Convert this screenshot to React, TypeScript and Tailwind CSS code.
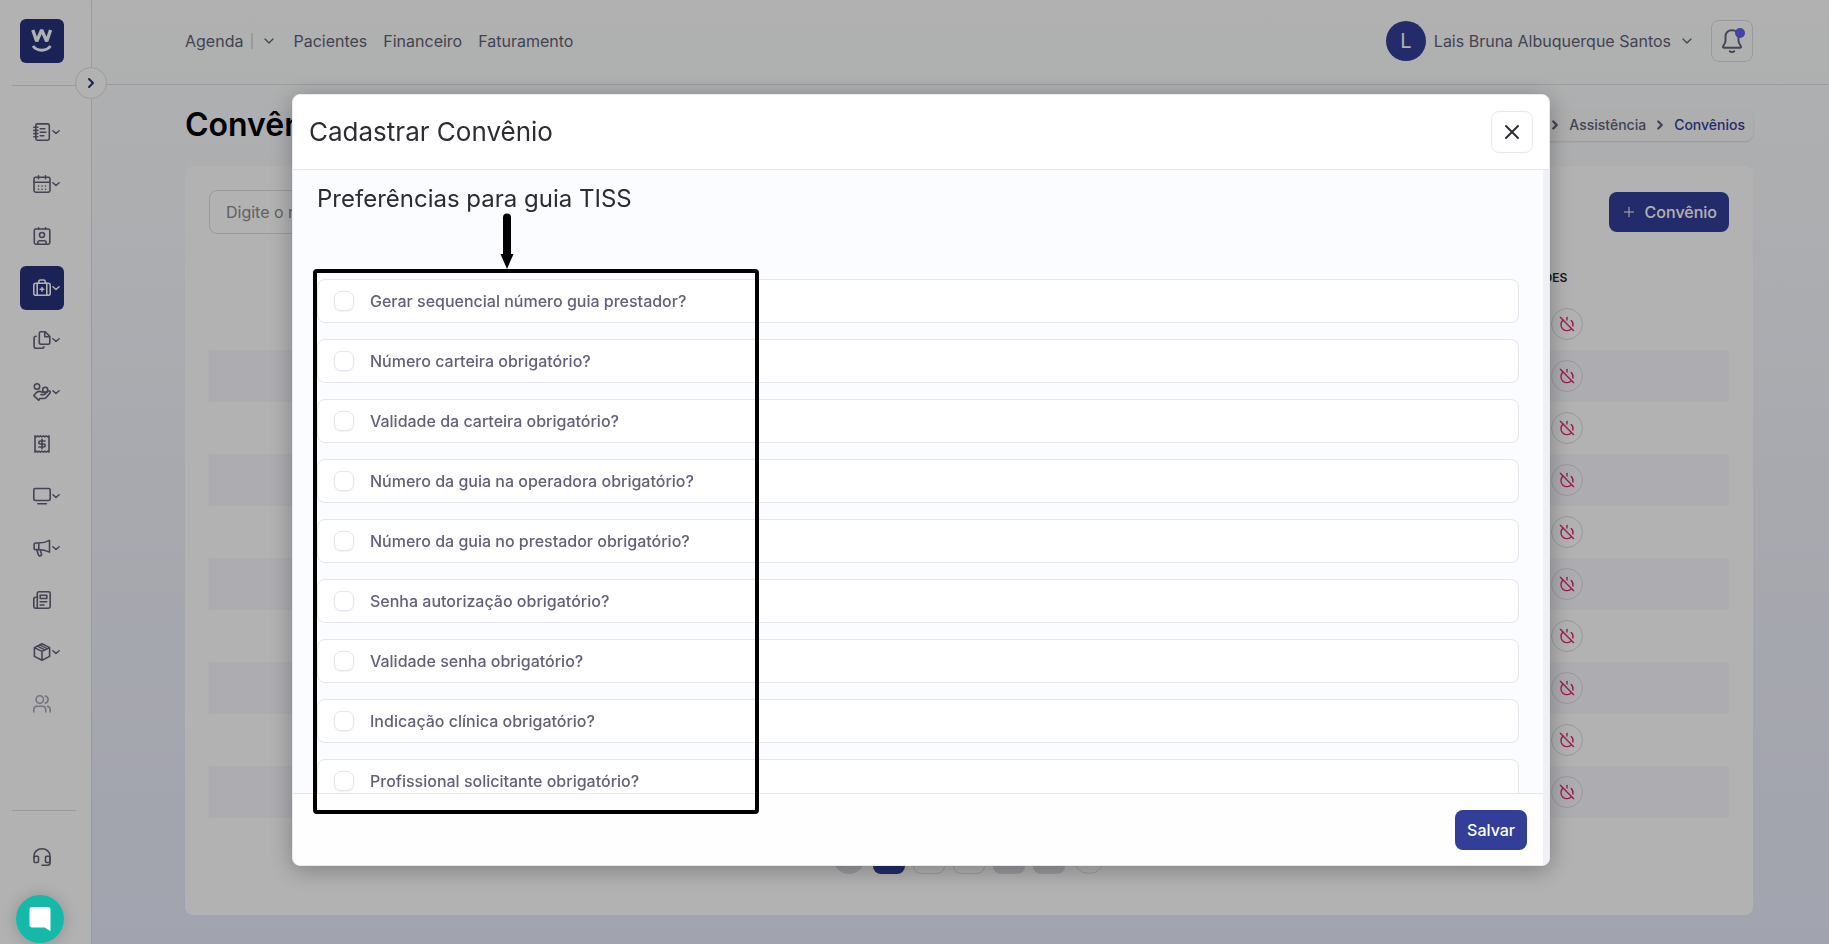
import type { ReactNode } from 'react';
import { ChevronDown, ChevronRight, Plus, PowerOff, X } from 'lucide-react';

const options = [
  'Gerar sequencial número guia prestador?',
  'Número carteira obrigatório?',
  'Validade da carteira obrigatório?',
  'Número da guia na operadora obrigatório?',
  'Número da guia no prestador obrigatório?',
  'Senha autorização obrigatório?',
  'Validade senha obrigatório?',
  'Indicação clínica obrigatório?',
  'Profissional solicitante obrigatório?',
];

const rows = Array.from({ length: 10 }, (_, i) => i + 1);

function Icon({ children, size = 18 }: { children: ReactNode; size?: number }) {
  return (
    <svg
      width={size}
      height={size}
      viewBox="0 0 18 18"
      fill="none"
      stroke="currentColor"
      strokeWidth="1.6"
      strokeLinecap="round"
      strokeLinejoin="round"
      aria-hidden="true"
    >
      {children}
    </svg>
  );
}

const menu = [
  {
    label: 'Cadastros',
    arrow: true,
    icon: (
      <Icon>
        <rect x="2.8" y="0.9" width="13.5" height="16.3" rx="1.6" />
        <path d="M0.8 4.2h4M0.8 7.4h4M0.8 10.6h4M0.8 13.8h4M7.2 5.7h4.6M7.2 9.2h5.6M7.2 12.7h3.6" />
      </Icon>
    ),
  },
  {
    label: 'Agenda',
    arrow: true,
    icon: (
      <Icon>
        <rect x="1" y="2.3" width="16" height="14.9" rx="1.6" />
        <path d="M1 7.3h16M5.5 0.8v3M12.5 0.8v3" />
        <path d="M5.5 11h.1M9 11h.1M12.5 11h.1M5.5 14.2h.1M9 14.2h.1M12.5 14.2h.1" />
      </Icon>
    ),
  },
  {
    label: 'Pacientes',
    arrow: false,
    icon: (
      <Icon>
        <rect x="1.3" y="2" width="15.5" height="15.2" rx="1.6" />
        <circle cx="9" cy="8" r="2.5" />
        <path d="M5.5 0.8V2M12.5 0.8V2M4.8 17v-1.2c0-1.3.8-2.1 2-2.1h4.4c1.2 0 2 .8 2 2.1V17" />
      </Icon>
    ),
  },
  {
    label: 'Assistência',
    arrow: true,
    active: true,
    icon: (
      <Icon>
        <rect x="0.8" y="4.3" width="16.4" height="12" rx="2" />
        <path d="M5.8 4.2V2.6c0-1 .6-1.6 1.6-1.6h3.2c1 0 1.6.6 1.6 1.6v1.6M4.2 4.4v11.8M13.8 4.4v11.8M9 8.5v3.600M7.200 10.300h3.600" />
      </Icon>
    ),
  },
  {
    label: 'Documentos',
    arrow: true,
    icon: (
      <Icon>
        <path d="M8 0.8h4.200l4.600 4.600v6.200c0 1-.7 1.700-1.700 1.700H8c-1 0-1.700-.7-1.700-1.700V2.500c0-1 .7-1.700 1.700-1.700z" />
        <path d="M11.800 1v4.700h4.800M3.200 5.200c-1.400 0-2.100.7-2.100 1.800v8.400c0 1.200.8 1.900 2 1.900h5.600c1.300 0 2-.5 2.100-1.500" />
      </Icon>
    ),
  },
  {
    label: 'Financeiro',
    arrow: true,
    icon: (
      <Icon>
        <circle cx="4" cy="3.500" r="2.700" />
        <circle cx="12.200" cy="6.800" r="2.500" />
        <path d="M0.800 12.600l2.600-3c1.700-1.500 3.700-1.600 5.600-.5h2.200c1.700.3 1.400 2.500-.4 2.500H8M11.800 11.300l3.300-3.200c1-.9 2.800.2 2 1.600l-3.800 4.800c-.6.700-1.300 1-2.200 1H6.900l-1.300 1.700M0.800 12.600l5 4.700" />
      </Icon>
    ),
  },
  {
    label: 'Faturamento',
    arrow: false,
    icon: (
      <Icon>
        <path d="M2 0.900l1.400.9 1.400-.9 1.400.9 1.400-.9 1.400.9 1.400-.9 1.400.9 1.400-.9 1.400.9 1.400-.9v16.200l-1.400-.9-1.400.9-1.400-.9-1.400.9-1.400-.9-1.400.9-1.400-.9-1.400.9-1.400-.9-1.400.9z" />
        <path d="M12 6H7.300a1.500 1.500 0 0 0 0 3h3.400a1.500 1.500 0 0 1 0 3H6M9 4.300v9.400" />
      </Icon>
    ),
  },
  {
    label: 'Monitor',
    arrow: true,
    icon: (
      <Icon>
        <rect x="0.800" y="1.500" width="16.400" height="12" rx="1.600" />
        <path d="M4.800 16.700h8.600" />
      </Icon>
    ),
  },
  {
    label: 'Marketing',
    arrow: true,
    icon: (
      <Icon>
        <path d="M5.800 4h-3c-1 0-1.700.7-1.700 1.700v3.200c0 1 .7 1.700 1.700 1.700h3c4.200 0 7.200.8 10.700 2.500V1.400C13 3.200 10 4 5.800 4zM5.800 4v6.600M3.800 10.800l1.400 4.600c.3 1.300 1.400 1.700 2.300 1.400 1-.4 1.300-1.200.9-2.200l-1.400-3.800" />
      </Icon>
    ),
  },
  {
    label: 'Notícias',
    arrow: false,
    icon: (
      <Icon>
        <path d="M4.300 17.200V2.400c0-1 .6-1.600 1.600-1.600h9.600c1 0 1.700.6 1.700 1.600v13.200c0 1-.7 1.600-1.700 1.600H2.500c-1 0-1.700-.6-1.700-1.600V8c0-1 .7-1.700 1.700-1.700h1.800" />
        <path d="M7.200 4.300h6.600v3.200H7.200zM7.200 10.800h6.600M7.200 14h3.800" />
      </Icon>
    ),
  },
  {
    label: 'Estoque',
    arrow: true,
    icon: (
      <Icon>
        <path d="M9 0.800l7.600 3.800v8.800L9 17.200l-7.600-3.800V4.600zM1.400 4.600L9 8.400l7.600-3.800M9 8.400v8.800" />
        <path d="M4.300 3.100l7.700 3.800M6.700 1.900l7.600 3.800" strokeWidth="1.200" />
      </Icon>
    ),
  },
];

function MenuArrow() {
  return (
    <svg className="absolute left-8 top-[18px]" width="8" height="8" viewBox="0 0 8 8" fill="none" stroke="currentColor" strokeWidth="1.5" strokeLinecap="round" strokeLinejoin="round" aria-hidden="true">
      <path d="M0.900 2.700L4 5.500l3.100-2.800" />
    </svg>
  );
}

function Sidebar() {
  return (
    <aside className="relative flex h-screen w-[92px] shrink-0 flex-col border-r border-[#dcdfe2] bg-white text-[#626178]">
      <a href="#" aria-label="Início" className="ml-5 mt-[19px] flex size-11 items-center justify-center rounded-md bg-[#27317a] text-[#fbfcfc]">
        <svg width="44" height="44" viewBox="0 0 44 44" fill="none" stroke="currentColor" aria-hidden="true">
          <path d="M12.800 11l3.900 11.200L21.700 11l5 11.200L30.600 11" strokeWidth="3.400" strokeLinejoin="bevel" />
          <path d="M13 27c4 5.600 13.500 5.600 17.500 0" strokeWidth="3" />
        </svg>
      </a>
      <div className="ml-3 mt-[22px] h-px w-16 bg-[#dcdfe2]" />
      <button aria-label="Expandir menu" className="absolute left-[75px] top-[67px] z-10 flex size-8 items-center justify-center rounded-full border border-[#dcdfe2] bg-white text-[#27317a]">
        <ChevronRight size={16} strokeWidth={3} />
      </button>

      <nav className="ml-5 mt-6 flex flex-col gap-2">
        {menu.map((item) => (
          <a
            key={item.label}
            href="#"
            aria-label={item.label}
            className={`relative flex size-11 items-center justify-center rounded-md ${item.active ? 'bg-[#27317a] text-white' : ''}`}
          >
            {item.icon}
            {item.arrow && <MenuArrow />}
          </a>
        ))}
        <a href="#" aria-label="Usuários" className="flex size-11 items-center justify-center text-[#a9a8b5]">
          <Icon>
            <circle cx="6.800" cy="4.500" r="3.700" />
            <path d="M0.800 17v-2.500c0-2 1.300-3.300 3.300-3.300h5.300c2 0 3.300 1.300 3.300 3.300V17M12.300 1c3.700.8 3.700 6.300 0 7.100M14.500 11.300c1.800.5 2.700 1.700 2.700 3.400V17" />
          </Icon>
        </a>
      </nav>

      <div className="mt-auto pb-[65px]">
        <div className="mb-6 ml-3 h-px w-16 bg-[#dcdfe2]" />
        <a href="#" aria-label="Suporte" className="ml-5 flex size-11 items-center justify-center">
          <Icon>
            <path d="M1 10V8.300C1 4 4.300.8 9 .8s8 3.200 8 7.500V15c0 1.500-.8 2.200-2.200 2.200H9" />
            <rect x="1" y="8.300" width="4.500" height="6.200" rx="1.300" />
            <rect x="12.500" y="8.300" width="4.500" height="6.200" rx="1.300" />
          </Icon>
        </a>
      </div>
    </aside>
  );
}

function Header() {
  return (
    <header className="flex h-[85px] items-center justify-between border-b border-[#dfdfea] pb-0.5 pl-[93px] pr-[76px] text-base text-[#626178]">
      <nav className="flex items-center gap-4">
        <div className="flex items-center">
          <a href="#">Agenda</a>
          <span className="ml-2 h-4 w-0.5 bg-[#dcdce6]" />
          <button aria-label="Abrir agenda" className="ml-2">
            <ChevronDown size={16} />
          </button>
        </div>
        <a href="#">Pacientes</a>
        <a href="#">Financeiro</a>
        <a href="#">Faturamento</a>
      </nav>
      <div className="flex items-center">
        <span className="flex size-10 items-center justify-center rounded-full bg-[#333e99] text-xl text-white">L</span>
        <button className="ml-2 flex items-center gap-2">
          Lais Bruna Albuquerque Santos
          <ChevronDown size={16} />
        </button>
        <button aria-label="Notificações" className="relative ml-4 flex size-[42px] items-center justify-center rounded-lg border border-[#dcdfe2]">
          <svg width="24" height="26" viewBox="0 0 22 24" fill="none" stroke="currentColor" strokeWidth="1.800" strokeLinecap="round" strokeLinejoin="round" aria-hidden="true">
            <path d="M11 2C7.300 2 5 4.500 5 8v3.500c0 2-.6 3.100-1.900 4.700-.9 1-.5 2.100.9 2.100h14c1.400 0 1.800-1.100.9-2.100-1.300-1.600-1.900-2.700-1.900-4.700V8c0-3.500-2.300-6-6-6zM9 21.500c1 1 3 1 4 0" />
          </svg>
          <span className="absolute right-[7px] top-[7px] size-2.5 rounded-full bg-[#625ff0]" />
        </button>
      </div>
    </header>
  );
}

function Pagination() {
  return (
    <nav aria-label="Paginação" className="mt-6 flex justify-center gap-2 text-sm">
      <button aria-label="Anterior" className="size-8 rounded-full bg-[#dcdce4]" />
      <button className="size-8 rounded-lg bg-[#333e99] text-white">1</button>
      <button className="size-8 rounded-lg border border-[#dfdfe4]">2</button>
      <button className="size-8 rounded-lg border border-[#dfdfe4]">3</button>
      <button className="size-8 rounded-lg bg-[#dcdce4]">...</button>
      <button className="size-8 rounded-lg bg-[#dcdce4]">9</button>
      <button aria-label="Próxima" className="size-8 rounded-full border border-[#dfdfe4]" />
    </nav>
  );
}

function Convenios() {
  return (
    <main className="pb-[29px] pl-[93px] pr-[76px] pt-6">
      <div className="flex h-8 items-center justify-between">
        <h1 className="text-[32px] font-semibold leading-8 text-black">Convênios</h1>
        <nav aria-label="Trilha" className="flex h-8 items-center gap-[7px] rounded-lg bg-[#f9f9fb] px-2 text-sm font-medium text-[#626178] shadow">
          <a href="#">Início</a>
          <ChevronRight size={14} strokeWidth={4} />
          <a href="#">Assistência</a>
          <ChevronRight size={14} strokeWidth={4} />
          <a href="#" className="text-[#333e99]">Convênios</a>
        </nav>
      </div>

      <section className="mt-[25px] rounded-lg bg-white px-6 pb-[41px] pt-6">
        <div className="flex items-center justify-between">
          <input
            type="text"
            aria-label="Buscar convênio"
            placeholder="Digite o nome do convênio"
            className="h-11 w-80 rounded-lg border border-[#dcdfe2] px-4 text-base placeholder:text-[#8b8b8f]"
          />
          <button className="flex h-10 items-center gap-2 rounded-lg bg-[#333e99] px-3 text-base font-medium text-white">
            <Plus size={16} strokeWidth={1.500} />
            Convênio
          </button>
        </div>

        <table className="mt-6 w-full table-fixed text-left text-sm text-[#626178]">
          <thead>
            <tr className="h-10 text-xs text-[#23232b]">
              <th scope="col" className="pl-4 font-semibold" />
              <th scope="col" className="w-[203px] font-semibold">AÇÕES</th>
            </tr>
          </thead>
          <tbody>
            {rows.map((row) => (
              <tr key={row} className="h-[52px] even:bg-[#f8f7fd]">
                <td />
                <td>
                  <button aria-label="Desativar" className="ml-[25px] flex size-8 items-center justify-center rounded-full border border-[#dcdce2] text-[#e0246f]">
                    <PowerOff size={16} />
                  </button>
                </td>
              </tr>
            ))}
          </tbody>
        </table>
        <Pagination />
      </section>
    </main>
  );
}

function Modal() {
  return (
    <div className="fixed inset-0 z-20 flex bg-black/30 pb-[78px] pl-[292px] pr-[279px] pt-[94px]">
      <div role="dialog" aria-modal="true" aria-labelledby="modal-title" className="relative flex min-w-0 flex-1 flex-col rounded-lg border border-[#e9eaee] bg-white shadow-[0_4px_24px_rgba(0,0,0,0.3)]">
        <div className="flex h-[75px] shrink-0 items-center justify-between border-b border-[#e5e6ec] px-4">
          <h2 id="modal-title" className="text-[26px] leading-8 text-[#2b2d33]">Cadastrar Convênio</h2>
          <button aria-label="Fechar" className="flex size-[42px] items-center justify-center rounded-lg border border-[#e8e9ed] text-[#2b2d33]">
            <X size={24} />
          </button>
        </div>

        <div className="flex min-h-0 flex-1">
          <div className="flex min-w-0 flex-1 flex-col">
            <div className="min-h-0 flex-1 overflow-hidden bg-[#fbfcff] px-6 pt-[13px]">
              <h3 className="text-2xl leading-8 text-[#2b2d33]">Preferências para guia TISS</h3>
              <div className="mt-16 flex flex-col gap-4">
                {options.map((option) => (
                  <label key={option} className="flex h-11 shrink-0 items-center gap-4 rounded-lg border border-[#e5e6ee] bg-white px-4 text-base font-medium text-[#626178]">
                    <input type="checkbox" className="size-5 appearance-none rounded-[7px] border border-[#e5e5ea] bg-white shadow-xs checked:bg-[#333e99]" />
                    {option}
                  </label>
                ))}
              </div>
            </div>
            <div className="flex h-[72px] shrink-0 items-center justify-end rounded-bl-lg border-t border-[#e5e6ec] bg-[#fefefe] px-4">
              <button className="h-10 rounded-lg bg-[#333e99] px-3 text-base font-medium text-white">Salvar</button>
            </div>
          </div>
          <div className="w-1.5 rounded-br-lg bg-[#f0f1f5]" />
        </div>

        {/* Highlight over the options list */}
        <div className="pointer-events-none absolute left-5 top-[174px] h-[545px] w-[446px] rounded-sm border-4 border-black" />
        <svg className="pointer-events-none absolute left-[207px] top-[118px]" width="14" height="56" viewBox="0 0 14 56" aria-hidden="true">
          <path d="M3 4.500a4 4 0 0 1 8 0V41h2.500L7 56 0.500 41H3z" />
        </svg>
      </div>
    </div>
  );
}

export default function App() {
  return (
    <div className="flex min-h-screen bg-[linear-gradient(to_bottom,#fdfefd_0%,#fafcfc_10%,#f4f6fc_35%,#e7eaf9_100%)] font-['Inter',sans-serif]">
      <Sidebar />
      <div className="min-w-0 flex-1">
        <Header />
        <Convenios />
      </div>

      <Modal />

      <button aria-label="Abrir chat" className="fixed bottom-px left-4 z-30 flex size-12 items-center justify-center rounded-full bg-[#15b9a9] shadow-[0_1px_16px_rgba(0,0,0,0.2)]">
        <svg width="22" height="26" viewBox="0 0 22 26" fill="white" aria-hidden="true">
          <path d="M3.500 1h15a3 3 0 0 1 3 3v21l-6-3.500h-12a3 3 0 0 1-3-3V4a3 3 0 0 1 3-3z" />
        </svg>
      </button>
    </div>
  );
}
